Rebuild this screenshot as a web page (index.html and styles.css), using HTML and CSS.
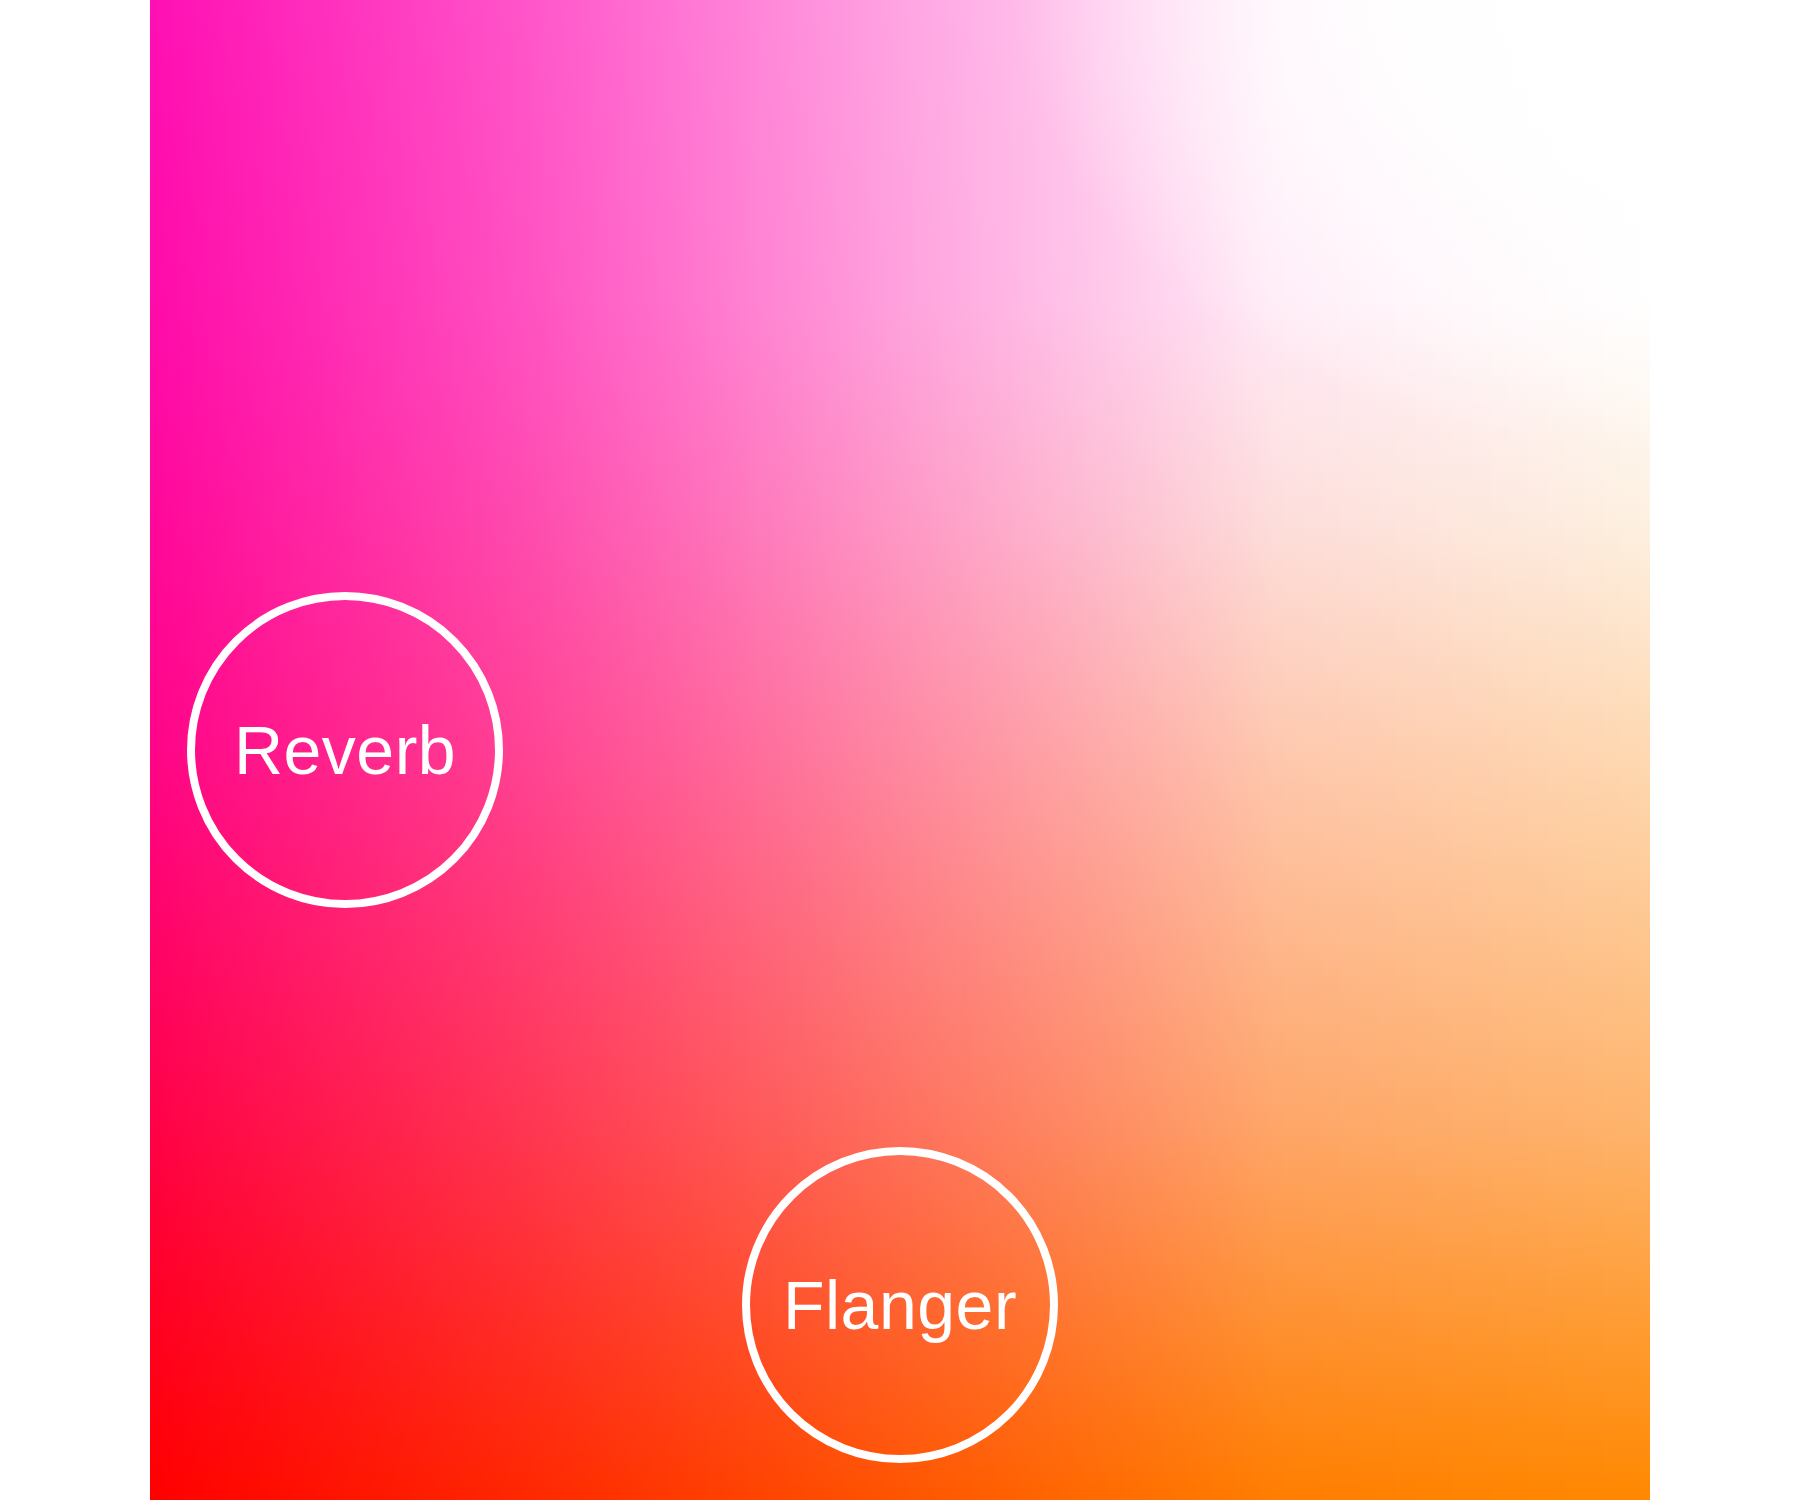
FILE: index.html
```html
<!DOCTYPE html>
<html lang="en">
<head>
<meta charset="utf-8">
<title>Effects Pad</title>
<link rel="stylesheet" href="styles.css">
</head>
<body>
<main class="pad">
  <div class="pad-tint"></div>
  <div class="pad-glow"></div>
  <button class="node" style="--x: 13%; --y: 50%;"><span class="node-label">Reverb</span></button>
  <button class="node" style="--x: 50%; --y: 87%;"><span class="node-label">Flanger</span></button>
</main>
</body>
</html>
```

FILE: styles.css
```css
html, body {
  margin: 0;
  padding: 0;
  background: #ffffff;
}

.pad {
  position: relative;
  width: 1500px;
  height: 1500px;
  margin: 0 auto;
  overflow: hidden;
  background: linear-gradient(to bottom,
    #ff10b4 0%,
    #ff0aa6 25%,
    #ff0588 50%,
    #ff0248 75%,
    #ff0000 100%);
}

.pad-tint {
  position: absolute;
  inset: 0;
  z-index: 0;
  background: linear-gradient(to bottom,
    #ffffff 0%,
    #fffefd 20%,
    #fdf0e0 35%,
    #fed9b2 50%,
    #feb46c 75%,
    #ff8800 100%);
  -webkit-mask-image: linear-gradient(to right,
    rgba(0,0,0,0) 0%,
    rgba(0,0,0,0.29) 25%,
    rgba(0,0,0,0.62) 50%,
    rgba(0,0,0,0.92) 75%,
    rgba(0,0,0,1) 100%);
  mask-image: linear-gradient(to right,
    rgba(0,0,0,0) 0%,
    rgba(0,0,0,0.29) 25%,
    rgba(0,0,0,0.62) 50%,
    rgba(0,0,0,0.92) 75%,
    rgba(0,0,0,1) 100%);
}

.pad-glow {
  position: absolute;
  inset: 0;
  z-index: 1;
  pointer-events: none;
  background: radial-gradient(ellipse 42% 30% at 100% 0%,
    rgba(255,255,255,1) 0%,
    rgba(255,255,255,0.9) 40%,
    rgba(255,255,255,0) 100%);
}

.node {
  position: absolute;
  z-index: 2;
  left: var(--x);
  top: var(--y);
  transform: translate(-50%, -50%);
  width: 316px;
  height: 316px;
  box-sizing: border-box;
  border: 8px solid #ffffff;
  border-radius: 50%;
  background: transparent;
  padding: 0;
  display: flex;
  align-items: center;
  justify-content: center;
  cursor: pointer;
}

.node-label {
  font-family: "Liberation Sans", Arial, Helvetica, sans-serif;
  font-size: 68px;
  line-height: 1;
  letter-spacing: 0.5px;
  color: #ffffff;
  font-weight: 400;
}
```
